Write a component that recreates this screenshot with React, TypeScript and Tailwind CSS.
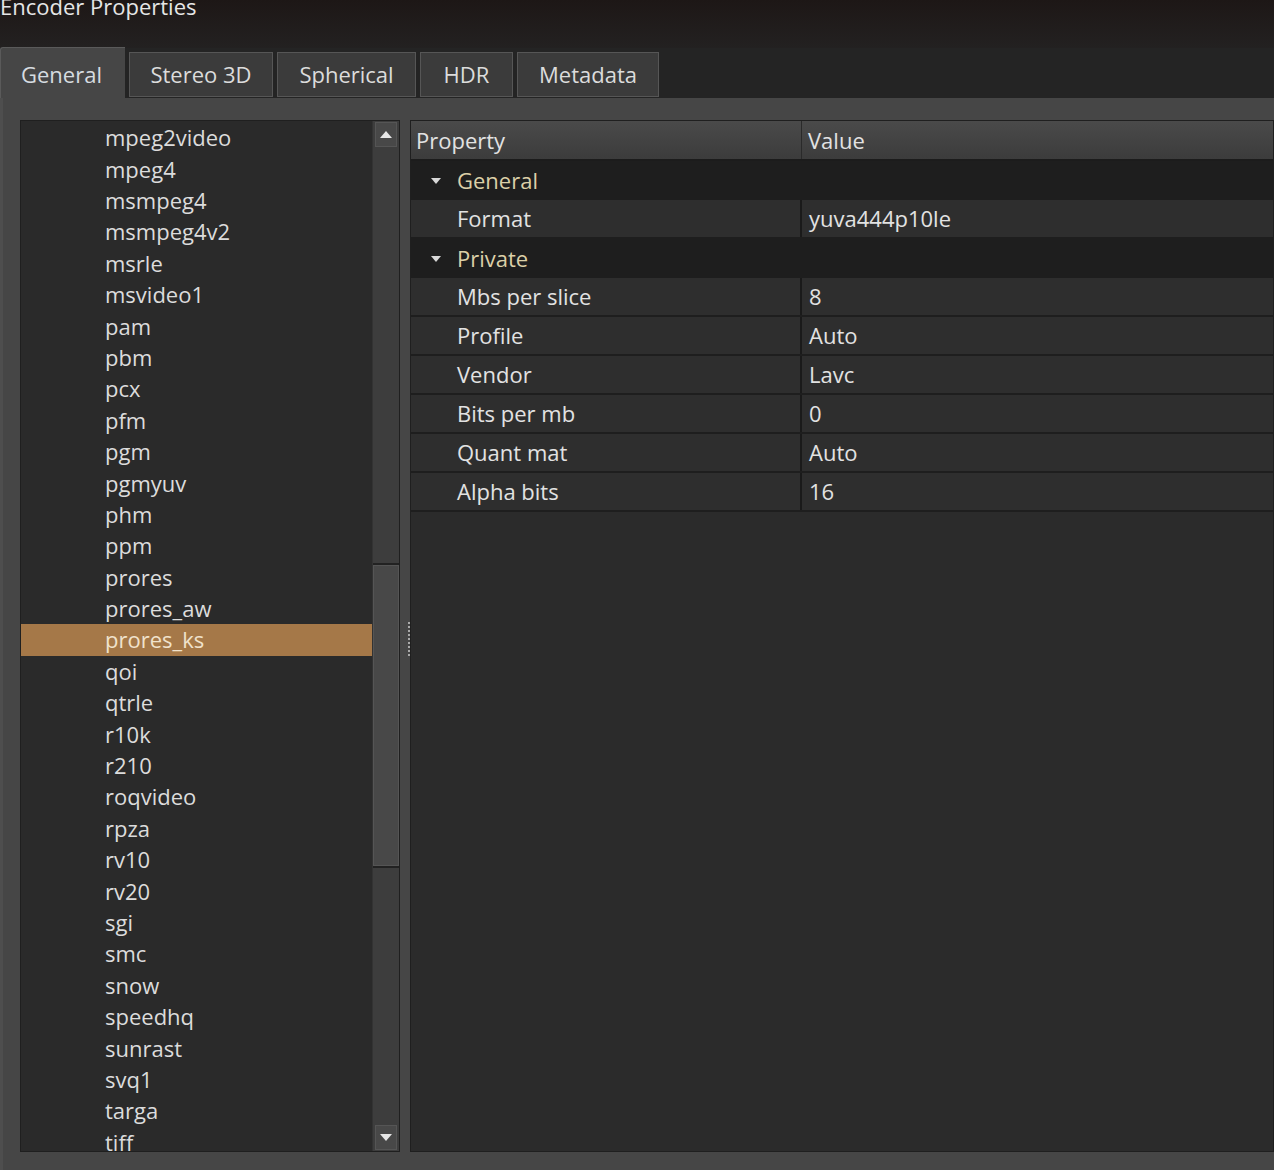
const codecs = [
  'mpeg2video', 'mpeg4', 'msmpeg4', 'msmpeg4v2', 'msrle', 'msvideo1', 'pam', 'pbm', 'pcx', 'pfm',
  'pgm', 'pgmyuv', 'phm', 'ppm', 'prores', 'prores_aw', 'prores_ks', 'qoi', 'qtrle', 'r10k',
  'r210', 'roqvideo', 'rpza', 'rv10', 'rv20', 'sgi', 'smc', 'snow', 'speedhq', 'sunrast',
  'svq1', 'targa', 'tiff',
];

type Row = { group?: boolean; name: string; value?: string };

const rows: Row[] = [
  { group: true, name: 'General' },
  { name: 'Format', value: 'yuva444p10le' },
  { group: true, name: 'Private' },
  { name: 'Mbs per slice', value: '8' },
  { name: 'Profile', value: 'Auto' },
  { name: 'Vendor', value: 'Lavc' },
  { name: 'Bits per mb', value: '0' },
  { name: 'Quant mat', value: 'Auto' },
  { name: 'Alpha bits', value: '16' },
];

// tab widths measured off the dialog
const tabs = [
  { label: 'Stereo 3D', w: 'w-[144px]' },
  { label: 'Spherical', w: 'w-[139px]' },
  { label: 'HDR', w: 'w-[93px]' },
  { label: 'Metadata', w: 'w-[142px]' },
];

function Arrow({ up }: { up?: boolean }) {
  return (
    <svg width="12" height="7" viewBox="0 0 12 7">
      <path d={up ? 'M0 7 L6 0 L12 7 Z' : 'M0 0 L12 0 L6 7 Z'} fill="#e6e6e6" />
    </svg>
  );
}

export default function App() {
  return (
    <div
      className="flex h-[1170px] w-[1274px] flex-col overflow-hidden bg-[#222]"
      style={{ fontFamily: '"Open Sans", "Noto Sans", sans-serif' }}
    >
      {/* title + tab strip */}
      <div className="h-[48px] shrink-0 bg-gradient-to-b from-[#1d1716] to-[#232121]">
        <div className="-mt-[8px] text-[22px] leading-[28px] text-[#e6e6e6]">Encoder Properties</div>
      </div>
      <div className="flex h-[50px] shrink-0 items-end gap-[4px] bg-[#242424]">
        <div className="-mb-[2px] flex h-[53px] w-[125px] items-center rounded-tl-[3px] border-t border-l border-[#5a5a5a] bg-[#464646] pl-[20px] text-[22px] text-[#d6dce0]">
          General
        </div>
        {tabs.map((t) => (
          <div
            key={t.label}
            className={`mb-[1px] flex h-[45px] items-center justify-center border border-[#565656] bg-[#3b3b3b] text-[22px] text-[#dcdcdc] ${t.w}`}
          >
            {t.label}
          </div>
        ))}
      </div>

      {/* tab page */}
      <div className="flex min-h-0 flex-1 border-l-[3px] border-[#4e4e4e] bg-[#464646] pt-[22px] pb-[18px] pl-[17px]">
        {/* codec list */}
        <div className="flex w-[380px] border border-[#1f1f1f] bg-[#2a2a2a]">
          <div className="flex-1 overflow-hidden pt-[1px]">
            {codecs.map((c) => (
              <div
                key={c}
                className={`flex h-[31.4px] items-center pl-[84px] text-[22px] ${
                  c === 'prores_ks' ? 'bg-[#a57848] text-[#f0e2cc]' : 'text-[#dcdcdc]'
                }`}
              >
                {c}
              </div>
            ))}
          </div>
          <div className="flex w-[27px] flex-col border-l border-[#333] bg-[#3d3d3d] py-[1px]">
            <div className="mx-[2px] flex h-[25px] items-center justify-center border border-[#555] bg-[#484848]">
              <Arrow up />
            </div>
            <div className="h-[416px]" />
            <div className="h-[305px] border-y-2 border-[#222] bg-[#484848] shadow-[inset_0_0_0_1px_#555]" />
            <div className="flex-1" />
            <div className="mx-[2px] flex h-[25px] items-center justify-center border border-[#555] bg-[#484848]">
              <Arrow />
            </div>
          </div>
        </div>

        {/* splitter */}
        <div className="flex w-[10px] items-start justify-end">
          <div className="mt-[502px] h-[34px] w-[2px] border-l-2 border-dotted border-[#aaa]" />
        </div>

        {/* property table */}
        <div className="flex-1 border border-[#1f1f1f] bg-[#2b2b2b]">
          <div className="flex h-[40px] border-b-2 border-[#1c1c1c] bg-gradient-to-b from-[#4a4a4a] to-[#3c3c3c] text-[22px] text-[#e2e2e2]">
            <div className="flex w-[391px] items-center border-r border-[#2a2a2a] pl-[5px]">Property</div>
            <div className="flex flex-1 items-center pl-[6px]">Value</div>
          </div>
          {rows.map((r) =>
            r.group ? (
              <div key={r.name} className="flex h-[39px] items-center bg-[#1e1e1e] text-[22px] text-[#dcd0a8]">
                <div className="flex w-[46px] justify-center pl-[4px]">
                  <svg width="10" height="6" viewBox="0 0 10 6">
                    <path d="M0 0 L10 0 L5 6 Z" fill="#d8d8d8" />
                  </svg>
                </div>
                {r.name}
              </div>
            ) : (
              <div key={r.name} className="flex h-[39px] border-b-2 border-[#1e1e1e] bg-[#2e2e2e] text-[22px] text-[#e2e2e2]">
                <div className="flex w-[391px] items-center border-r-2 border-[#1a1a1a] pl-[46px]">{r.name}</div>
                <div className="flex flex-1 items-center pl-[7px]">{r.value}</div>
              </div>
            )
          )}
        </div>
      </div>
    </div>
  );
}
